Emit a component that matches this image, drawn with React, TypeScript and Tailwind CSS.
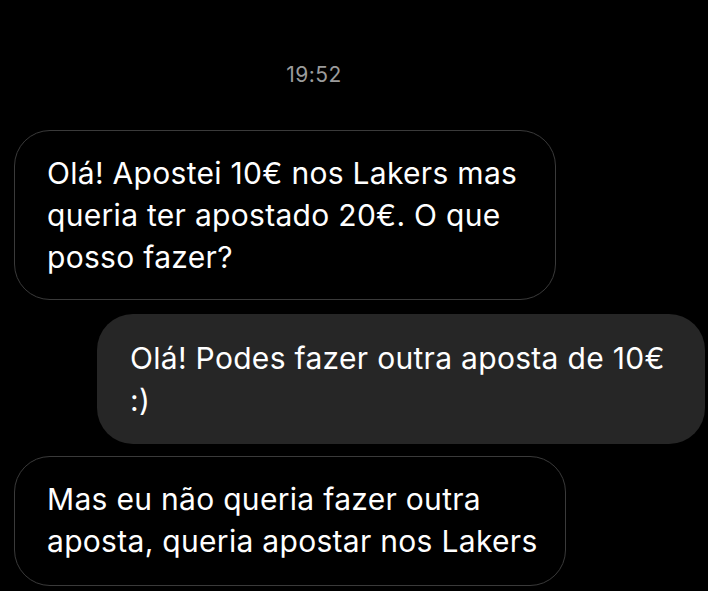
const App = () => {
  return (
    <div className="min-h-[591px] bg-black font-['Inter','Noto_Sans',sans-serif] text-white">
      <div className="flex flex-col pt-[63px]">
        <div className="mb-[43px] pr-[80px] text-center text-[21px] leading-[24px] tracking-[0.02em] text-[#9b9b9b]">19:52</div>

        <div className="ml-[14px] w-[542px] whitespace-nowrap rounded-[36px] border border-[#3a3a3a] px-[32px] py-[21px] text-[30px] leading-[42px] tracking-[0.01em]">
          Olá! Apostei 10€ nos Lakers mas
          <br />
          queria ter apostado 20€. O que
          <br />
          posso fazer?
        </div>

        <div className="mt-[14px] ml-[97px] w-[608px] whitespace-nowrap rounded-[36px] bg-[#262626] px-[33px] py-[23px] text-[30px] leading-[42px] tracking-[0.01em]">
          Olá! Podes fazer outra aposta de 10€
          <br />
          :)
        </div>

        <div className="mt-[12px] ml-[14px] w-[552px] whitespace-nowrap rounded-[36px] border border-[#3a3a3a] px-[32px] pt-[21px] pb-[23px] text-[30px] leading-[42px] tracking-[0.01em]">
          Mas eu não queria fazer outra
          <br />
          aposta, queria apostar nos Lakers
        </div>
      </div>
    </div>
  );
};

export default App;
